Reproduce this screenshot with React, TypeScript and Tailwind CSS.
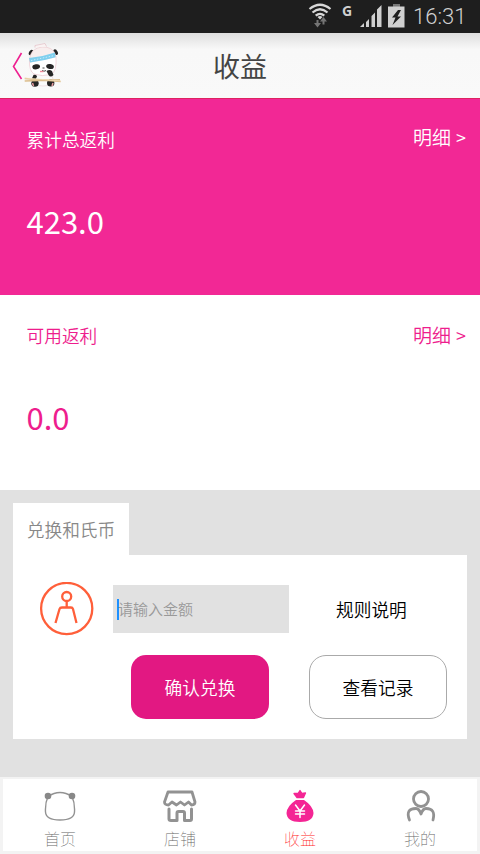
import type { ReactNode } from 'react';

// Status bar

function StatusBar() {
    return (
        <div className="h-[33px] shrink-0 bg-[#1e1e1e] flex items-start pl-[308px] text-[#d0d0d0]">
            <svg width="24" height="33" viewBox="0 0 24 33" fill="none" stroke="#d8d8d8" strokeWidth="2.2">
                <path d="M1.500 9Q12 0.500 22.500 9" />
                <path d="M4.500 12.500Q12 6 19.500 12.500" />
                <path d="M7.700 15.700Q12 12 16.300 15.700" />
                <path d="M9.500 17Q12 15 14.500 17L12 19.500Z" fill="#d8d8d8" stroke="none" />
                <path d="M9.500 20v5.500M15.500 24.500v-5" stroke="#757575" strokeWidth="2" />
                <path d="M6 23h7l-3.500 4.500zM12 21.500h7l-3.500-4.500z" fill="#757575" stroke="none" />
            </svg>
            <span className="ml-[10px] mt-[3px] w-[10px] text-[14px] leading-4 font-bold font-['Open_Sans',sans-serif]">G</span>
            <svg className="ml-[7px]" width="24" height="33" viewBox="0 0 24 33" fill="#d0d0d0">
                <path d="M1 27L5 23V27ZM7 22L10 19V27H7ZM12.500 16L16 12.500V27H12.500ZM18 9.500L22.500 5V27H18Z" />
            </svg>
            <svg className="ml-[4px]" width="18" height="33" viewBox="0 0 18 33">
                <path d="M6 4h7v3H6z" fill="#777" />
                <path d="M1 6.500h16.500v21H1z" fill="#d0d0d0" />
                <path d="M11 10L5 17.500H8.500L5.500 25L14 16.500H10.500L14 10Z" fill="#1e1e1e" />
            </svg>
            <span className="ml-[8px] text-[22px] leading-[33px] font-light font-[Roboto,sans-serif]">16:31</span>
        </div>
    );
}

function PandaLogo() {
    return (
        <svg className="-ml-px" width="40" height="48" viewBox="0 0 40 48" fill="none">
            <ellipse cx="9" cy="10.500" rx="1.900" ry="3" transform="rotate(30 9 10.500)" fill="#222" />
            <ellipse cx="33.700" cy="10.200" rx="1.900" ry="3" transform="rotate(-30 33.700 10.200)" fill="#222" />
            <path d="M12 32Q9 37 11 43Q21 45 31 43Q32 37 29 31Z" fill="#fafafa" stroke="#e6c9cf" strokeWidth=".5" />
            <path d="M7.500 18Q7 29 12 32Q20 35 29 32.500Q35 30 34 14Z" fill="#fff" stroke="#edc6cf" strokeWidth=".7" />
            <path d="M7.500 17Q9 6 20 5Q31 4.500 33.500 13V15L8 20Z" fill="#f8eeee" stroke="#edcbd0" strokeWidth=".7" />
            <path d="M13 5.500V3.500L23 1.500L24.500 4.500" fill="#faf3f3" stroke="#e2bfc5" strokeWidth=".7" />
            <path d="M7 16Q20 15 33 10.500L33.500 15.200Q21 19 8 20.500Z" fill="#80cfee" />
            <path d="M9 18.500L32.500 13.500" stroke="#c4eafa" strokeWidth="1" strokeDasharray="1.500 1.500" />
            <ellipse cx="14.200" cy="24.800" rx="3.900" ry="2.500" transform="rotate(-10 14.200 24.800)" fill="#252525" />
            <ellipse cx="28" cy="24.500" rx="3.900" ry="2.500" transform="rotate(10 28 24.500)" fill="#252525" />
            <path d="M20.500 26h2M20 28.500q2 1.500 4 0" stroke="#333" strokeWidth=".9" />
            <path d="M18 29.500h3.500" stroke="#f08b99" strokeWidth="1.400" />
            <path d="M24.500 29q3-2 5.500 0l1.500 4q-3 3-5 0z" fill="#252525" />
            <path d="M11.500 33q3-1 3.500 1.500l-2 4-3-2z" fill="#252525" />
            <ellipse cx="13" cy="41.300" rx="3.700" ry="3.500" fill="#252525" />
            <ellipse cx="28.700" cy="41" rx="3.700" ry="3.500" fill="#252525" />
            <path d="M10.500 41l1 3M31 41l-1 3" stroke="#e79b9f" strokeWidth="1.500" />
            <path d="M2.700 36.500L38.700 39.500M2.700 39L38 37.800" stroke="#dcbd8c" strokeWidth="1.500" />
            <path d="M2.700 36L38.700 39" stroke="#f5e5c6" strokeWidth=".7" />
        </svg>
    );
}

function Header() {
    return (
        <header className="h-[66px] shrink-0 grid grid-cols-3 items-center border-b border-[#dd2460] bg-linear-to-b from-[#dedede] via-[#f8f8f8] via-25% to-[#f9f9f9]">
            <div className="flex items-center pl-[12px]">
                <svg width="11" height="28" viewBox="0 0 11 28" fill="none" stroke="#ee2090" strokeWidth="1.600">
                    <path d="M9.500 1L1.500 14.500L9.500 27" />
                </svg>
                <PandaLogo />
            </div>
            <h1 className="text-center text-[27px] leading-[60px] text-[#444]">收益</h1>
        </header>
    );
}

interface BalancePanelProps {
    label: string;
    amount: string;
    className: string;
    linkClassName: string;
}

function BalancePanel({ label, amount, className, linkClassName }: BalancePanelProps) {
    return (
        <section className={`shrink-0 pl-[26.5px] pr-[14px] ${className}`}>
            <div className="flex justify-between h-[53px]">
                <span className="pt-[27px] text-[17.7px] leading-[26px] font-[350]">{label}</span>
                <span className={`text-[19px] leading-[26px] font-[350] ${linkClassName}`}>
                    明细<span className="ml-[5px] text-[18px]">&gt;</span>
                </span>
            </div>
            <p className="mt-[47px] text-[31px] leading-[43px] font-normal">{amount}</p>
        </section>
    );
}

function ExchangeCard() {
    return (
        <section className="h-[287px] shrink-0 bg-[#e1e1e1] px-[13px] pt-[13px]">
            <div className="w-[116px] h-[52px] bg-white text-center text-[17.7px] leading-[53px] font-[350] text-[#888]">
                兑换和氏币
            </div>
            <div className="h-[184px] bg-white pt-[27px]">
                <div className="flex items-center">
                    <svg className="ml-[26px]" width="56" height="54" viewBox="0 0 56 54" fill="none" stroke="#ff5f3a" strokeWidth="2.3">
                        <circle cx="27.700" cy="26.500" r="25.600" />
                        <circle cx="27.700" cy="14.500" r="4.500" />
                        <path d="M27.700 19V25.500M16.500 41L20.500 27Q21 25.500 23 25.500H32Q33.500 25.500 34 27L37.500 41" />
                    </svg>
                    <div className="ml-[18px] w-[176px] h-12 bg-[#e1e1e1] flex items-center pl-[4px] text-[15px] font-[350] text-[#999]">
                        <span className="w-[2px] h-[21px] -mr-px bg-[#1e90ff]" />
                        <span className="leading-6">请输入金额</span>
                    </div>
                    <span className="ml-[47px] text-[17.7px] leading-6 font-[350] text-black">规则说明</span>
                </div>
                <div className="flex gap-10 mt-[19px] pl-[118px] text-[17.7px] font-[350]">
                    <button className="w-[138px] h-16 rounded-[15px] bg-[#e21882] pt-px text-white">
                        确认兑换
                    </button>
                    <button className="w-[138px] h-16 rounded-[17px] border-[1.5px] border-[#aaa] bg-white pt-px text-black">
                        查看记录
                    </button>
                </div>
            </div>
        </section>
    );
}

// Bottom navigation

interface NavItemProps {
    label: string;
    active?: boolean;
    children: ReactNode;
}

function NavItem({ label, active, children }: NavItemProps) {
    return (
        <div className="flex-1 flex flex-col items-center pt-[9px]">
            <svg width="36" height="36" viewBox="0 0 36 36" fill="none" stroke="#929292" strokeLinecap="round" strokeLinejoin="round">
                {children}
            </svg>
            <span className={`mt-px text-[16px] leading-[26px] font-thin ${active ? 'text-[#ff2525]' : 'text-[#666]'}`}>{label}</span>
        </div>
    );
}

function BottomNav() {
    return (
        <nav className="h-[77px] shrink-0 bg-[#f3f3f3] px-[3px] pt-[2px] pb-[3px]">
            <div className="h-full bg-white">
                <div className="flex -mx-[3px]">
                    <NavItem label="首页">
                        <path d="M6 8.500Q18 0.500 30 8.500Q33 15 32.500 24Q32 32 18 32Q4 32 3.500 24Q3 15 6 8.500Z" strokeWidth="1.400" />
                        <circle cx="6" cy="8" r="3.300" fill="#888" stroke="none" />
                        <circle cx="30" cy="8" r="3.300" fill="#888" stroke="none" />
                    </NavItem>
                    <NavItem label="店铺">
                        <path d="M6 4H30L33 14Q33 17 29.500 17L26.500 14L22.500 17L18.500 14L14.500 17L10 14L6.500 17Q2.500 17 2.500 14Z" strokeWidth="2.800" />
                        <path d="M7 21V31Q7 32.500 9 32.500H15V25Q15 23.500 16.500 23.500H21Q22.500 23.500 22.500 25V32.500H28Q29.500 32.500 29.500 31V21" strokeWidth="3" />
                    </NavItem>
                    <NavItem label="收益" active>
                        <path d="M15 9.500L12 5.500L16 5.500L18 2.500L20 5.500L23.500 5L21.500 9.500Z" fill="#f42594" stroke="#f42594" strokeWidth="1.300" />
                        <path d="M14 12H22Q31 18 31.500 25Q31 34 18 34Q5 34 4.500 25Q5 18 14 12Z" fill="#f42594" stroke="none" />
                        <path d="M13.500 17L18 23L22.500 17M13.500 23H22.500M13.500 26H22.500M18 23V29.500" stroke="#fff" strokeWidth="1.500" />
                    </NavItem>
                    <NavItem label="我的">
                        <circle cx="19" cy="11" r="7.500" strokeWidth="2.800" />
                        <path d="M7.500 32Q3 20.500 14 20.500Q17 20.500 19 26Q21 20.500 24 20.500Q34 20.500 31 32" strokeWidth="2.800" />
                    </NavItem>
                </div>
            </div>
        </nav>
    );
}

export default function App() {
    return (
        <div className="w-[480px] h-[854px] flex flex-col overflow-hidden bg-white font-['Noto_Sans_CJK_SC',sans-serif]">
            <StatusBar />
            <Header />
            <BalancePanel label="累计总返利" amount="423.0" className="h-[196px] bg-[#f22895] text-white" linkClassName="pt-[25px]" />
            <BalancePanel label="可用返利" amount="0.0" className="h-[195px] bg-white text-[#ee1d8d]" linkClassName="pt-[27px]" />
            <ExchangeCard />
            <BottomNav />
        </div>
    );
}
